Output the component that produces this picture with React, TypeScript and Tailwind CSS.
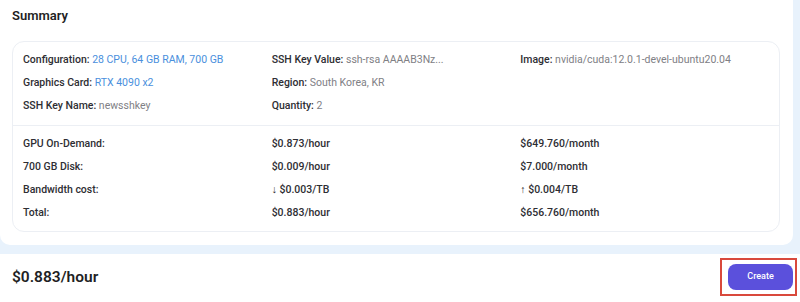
import React from "react";

const Label = ({ children }: { children: React.ReactNode }) => (
  <span className="font-medium text-[#2e2e33]">{children}</span>
);

export default function App() {
  return (
    <div className="w-[800px] h-[302px] bg-white overflow-hidden" style={{ fontFamily: "Roboto, 'Noto Sans', sans-serif" }}>
      <div className="bg-[#e8f2fc] pr-[7px] pb-[9px]">
        <div className="bg-white rounded-b-[10px] pl-3 pr-[13px] pt-[7px] pb-[13px]">
          <h2 className="text-[13px] leading-[18px] font-semibold text-[#1f1f24]">Summary</h2>
          <div className="mt-[16px] border border-[#eceff4] rounded-[12px]">
            <div className="grid grid-cols-3 gap-y-[9px] px-[10px] pt-[11px] pb-[12px] text-[10.5px] leading-[14px]">
              <div>
                <Label>Configuration:</Label> <span className="text-[#4a8fdd]">28 CPU, 64 GB RAM, 700 GB</span>
              </div>
              <div>
                <Label>SSH Key Value:</Label> <span className="text-[#808085]">ssh-rsa AAAAB3Nz...</span>
              </div>
              <div>
                <Label>Image:</Label> <span className="text-[#808085]">nvidia/cuda:12.0.1-devel-ubuntu20.04</span>
              </div>
              <div>
                <Label>Graphics Card:</Label> <span className="text-[#4a8fdd]">RTX 4090 x2</span>
              </div>
              <div>
                <Label>Region:</Label> <span className="text-[#808085]">South Korea, KR</span>
              </div>
              <div />
              <div>
                <Label>SSH Key Name:</Label> <span className="text-[#808085]">newsshkey</span>
              </div>
              <div>
                <Label>Quantity:</Label> <span className="text-[#808085]">2</span>
              </div>
              <div />
            </div>
            <div className="border-t border-[#eceff4] grid grid-cols-3 gap-y-[9px] px-[10px] pt-[11px] pb-[11px] text-[10.5px] leading-[14px] font-medium text-[#2e2e33]">
              <div>GPU On-Demand:</div>
              <div>$0.873/hour</div>
              <div>$649.760/month</div>
              <div>700 GB Disk:</div>
              <div>$0.009/hour</div>
              <div>$7.000/month</div>
              <div>Bandwidth cost:</div>
              <div>↓ $0.003/TB</div>
              <div>↑ $0.004/TB</div>
              <div>Total:</div>
              <div>$0.883/hour</div>
              <div>$656.760/month</div>
            </div>
          </div>
        </div>
      </div>
      <div className="flex items-start justify-between pl-3 pr-[3px] pt-[4px]">
        <div className="mt-[8px] text-[15.5px] leading-[22px] font-semibold text-[#1f1f24]">$0.883/hour</div>
        <div className="border-2 border-[#d9493c] pl-[6px] pr-[2px] py-[4px]">
          <button className="block w-[65px] h-[26px] rounded-[8px] bg-[#5b50dc] text-white text-[9px] font-medium">
            Create
          </button>
        </div>
      </div>
    </div>
  );
}
